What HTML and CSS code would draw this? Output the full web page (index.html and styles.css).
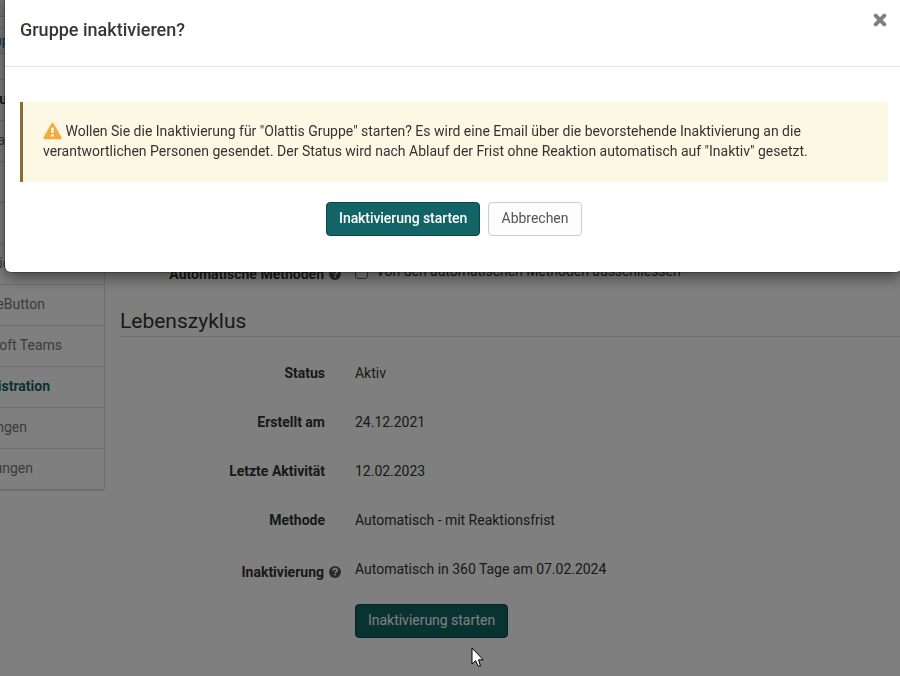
FILE: index.html
```html
<!DOCTYPE html>
<html lang="de">
<head>
<meta charset="utf-8">
<title>Gruppe inaktivieren?</title>
<link rel="stylesheet" href="styles.css">
</head>
<body>
<svg class="defs" width="0" height="0" aria-hidden="true">
  <symbol id="help" viewBox="0 0 12 12">
    <circle cx="6" cy="6" r="6" fill="currentColor"/>
    <path d="M4 4.600C4.100 3.200 5 2.700 6.100 2.700c1.200 0 2 .7 2 1.700C8.100 5.700 6.300 5.500 6.100 7" fill="none" stroke="#fff" stroke-width="1.700"/>
    <rect x="5.200" y="7.800" width="1.700" height="1.700" fill="#fff"/>
  </symbol>
</svg>
<div class="page">
  <aside class="side">
    <div class="topbar"></div>
    <div class="toolbar"></div>
    <div class="crumbs"><span>Grup</span></div>
    <nav class="menu">
      <a class="blank"></a>
      <a class="head"><span class="w7">Gru</span></a>
      <a><span class="w5">Ka</span></a>
      <a></a>
      <a></a>
      <a><span class="w10">Mitglic</span></a>
      <a><span class="w45">BigBlueButton</span></a>
      <a><span class="w62">Microsoft Teams</span></a>
      <a class="active"><span class="w50">Administration</span></a>
      <a><span class="w27">Buchungen</span></a>
      <a><span class="w33">Einstellungen</span></a>
    </nav>
  </aside>
  <main class="main">
    <div class="row auto">
      <div class="label">Automatische Methoden<svg class="help"><use href="#help"/></svg></div>
      <div class="value check"><i class="box"></i><span>Von den automatischen Methoden ausschliessen</span></div>
    </div>
    <h2>Lebenszyklus</h2>
    <div class="row"><div class="label plain">Status</div><div class="value">Aktiv</div></div>
    <div class="row"><div class="label plain">Erstellt am</div><div class="value">24.12.2021</div></div>
    <div class="row"><div class="label plain">Letzte Aktivität</div><div class="value">12.02.2023</div></div>
    <div class="row"><div class="label plain">Methode</div><div class="value">Automatisch - mit Reaktionsfrist</div></div>
    <div class="row last"><div class="label">Inaktivierung<svg class="help"><use href="#help"/></svg></div><div class="value">Automatisch in 360 Tage am 07.02.2024</div></div>
    <button class="btn primary start">Inaktivierung starten</button>
  </main>
</div>
<div class="backdrop"></div>
<section class="modal">
  <header>
    <h4>Gruppe inaktivieren?</h4>
    <svg class="close" viewBox="0 0 14 14"><path d="M2.700 2.700l8.600 8.600M11.300 2.700l-8.600 8.600" stroke="#808080" stroke-width="4" stroke-linecap="round"/></svg>
  </header>
  <div class="body">
    <p class="warning"><svg class="warn" viewBox="0 0 20 18"><path d="M10 1.500L18.500 16.500H1.500Z" fill="#f4ab3c" stroke="#f4ab3c" stroke-width="2.400" stroke-linejoin="round"/><path d="M8.600 5.500h2.800l-.4 5.500H9zM8.800 12.500h2.400v2.400H8.800z" fill="#fff"/></svg> Wollen Sie die Inaktivierung für "Olattis Gruppe" starten? Es wird eine Email über die bevorstehende Inaktivierung an die<br>verantwortlichen Personen gesendet. Der Status wird nach Ablauf der Frist ohne Reaktion automatisch auf "Inaktiv" gesetzt.</p>
    <div class="actions">
      <button class="btn primary strong">Inaktivierung starten</button>
      <button class="btn plain-btn">Abbrechen</button>
    </div>
  </div>
</section>
<svg class="cursor" viewBox="0 0 13 20"><path d="M1 1V17L4.600 13.600L7 19H9.500L7.500 12.800H12.200Z" fill="#fff" stroke="#000"/></svg>
</body>
</html>
```
FILE: styles.css
```css
* { box-sizing: border-box; }
body { margin: 0; width: 900px; height: 676px; overflow: hidden; background: #fff; font: 14px/20px Roboto, sans-serif; color: #333; }
.defs { position: absolute; }
.page { display: flex; height: 676px; overflow: hidden; }
.side { width: 105px; flex: none; overflow: hidden; }
.topbar { height: 17px; background: #eee; border-bottom: 1px solid #ccc; }
.toolbar { height: 10px; background: #fff; }
.crumbs { height: 27px; background: #f5f5f5; border: solid #ddd; border-width: 1px 0; display: flex; color: #0b6ca8; font-size: 13px; line-height: 25px; }
.crumbs span { width: 9px; white-space: nowrap; display: flex; justify-content: flex-end; }
.menu { height: 437px; border: solid #ddd; border-width: 0 1px 2px 0; border-radius: 0 0 4px 0; }
.menu a { display: flex; height: 41px; border-bottom: 1px solid #ddd; color: #777; align-items: center; padding-bottom: 2px; }
.menu a.blank { height: 26px; }
.menu a:last-child { border-bottom: 0; padding-bottom: 3px; }
.menu a.head { color: #333; font-weight: 700; }
.menu a.active { color: #136466; font-weight: 700; }
.menu span { display: flex; justify-content: flex-end; white-space: nowrap; flex: none; }
.w5 { width: 5px; } .w7 { width: 7px; } .w10 { width: 10px; } .w45 { width: 45px; }
.w62 { width: 62px; } .w50 { width: 50px; } .w27 { width: 27px; } .w33 { width: 33px; }
.main { flex: 1; padding: 261px 0 0 15px; }
.row { display: flex; height: 49px; }
.label { width: 221px; margin-right: 14px; text-align: right; font-weight: 700; white-space: nowrap; }
.label.plain { padding-right: 16px; }
.value { white-space: nowrap; letter-spacing: -.015px; }
.help { width: 12px; height: 12px; margin-left: 5px; vertical-align: -1px; color: #555; }
.row.auto { height: 49px; padding-top: 3px; }
.check { display: flex; gap: 8px; margin-top: -3px; letter-spacing: -.03px; }
.box { width: 13px; height: 13px; border: 1px solid #666; border-radius: 3px; margin-top: 5px; }
h2 { margin: 0 0 26px; height: 27px; border-bottom: 1px solid #ddd; font-size: 21px; line-height: 23px; font-weight: 400; }
.row.last { height: 45px; }
.last .label { padding-top: 3px; }
.btn { height: 34px; border: 1px solid; border-radius: 4px; padding: 0 12px 2px; font: 14px/20px Roboto, sans-serif; white-space: nowrap; letter-spacing: -.02px; }
.primary { background: #136466; border-color: #0c4445; color: #fff; }
.strong { font-weight: 500; width: 154px; letter-spacing: -.06px; }
.plain-btn { background: #fdfdfd; border-color: #ccc; color: #555; width: 94px; }
.start { margin-left: 235px; width: 153px; }
.backdrop { position: fixed; inset: 0; background: rgba(0,0,0,.5); }
.modal { position: fixed; left: 5px; top: -6px; width: 897px; height: 278px; background: #fff; border-radius: 6px; box-shadow: 0 0 0 1px rgba(0,0,0,.2), 0 5px 15px rgba(0,0,0,.5); }
.modal header { height: 73px; border-bottom: 1px solid #e5e5e5; padding: 19px 15px 0; display: flex; justify-content: space-between; }
h4 { margin: 4px 0 0; font-size: 18px; line-height: 25px; font-weight: 500; color: #3c3531; }
.close { width: 14px; height: 14px; }
.body { padding: 35px 14px 0 15px; }
.warning { margin: 0; height: 80px; padding: 19px 20px; border-left: 3px solid #8a6d3b; background: #fcf8e3; white-space: nowrap; letter-spacing: -.008px; }
.warn { width: 19px; height: 18px; vertical-align: -4px; }
.actions { display: flex; justify-content: center; gap: 8px; padding-top: 20px; }
.cursor { position: fixed; left: 471px; top: 647px; width: 13px; height: 20px; }
```
